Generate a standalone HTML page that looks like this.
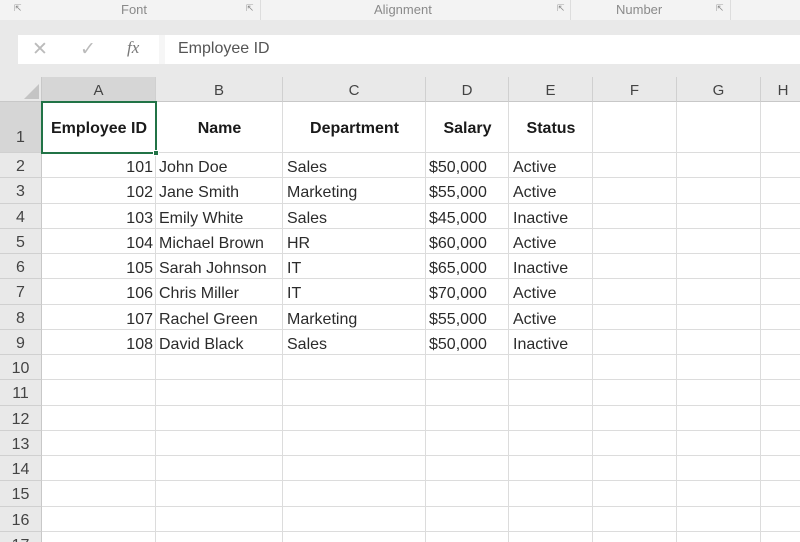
<!DOCTYPE html>
<html style="overflow:hidden;width:800px;height:542px"><head><meta charset="utf-8"><style>
*{margin:0;padding:0;box-sizing:border-box}
body{width:800px;height:542px;overflow:hidden;background:#e9e9e9;font-family:"Liberation Sans",sans-serif;position:relative}
.a{position:absolute}
.rib{left:0;top:0;width:800px;height:20px;background:#f3f3f3;color:#8a8a8a;font-size:13px}
.fb{left:18px;top:35px;width:782px;height:29px;background:#f6f6f6}
.grid{left:0;top:77px;width:800px;height:465px;background:#fff}
.ch{top:77px;height:25px;background:#e9e9e9;border-right:1px solid #d0d0d0;border-bottom:1px solid #c8c8c8;text-align:center;color:#444;font-size:15px;line-height:27px}
.rh{left:0;width:42px;background:#e9e9e9;border-bottom:1px solid #d0d0d0;border-right:1px solid #c8c8c8;text-align:center;color:#444;font-size:16px}
.vl{top:102px;width:1px;height:440px;background:#dcdcdc}
.hl{left:42px;width:758px;height:1px;background:#dcdcdc}
.c{font-size:16px;color:#2b2b2b;white-space:nowrap;line-height:25px;height:25px}
.b{font-weight:bold;font-size:16px;color:#1a1a1a}
</style></head><body>
<div class="a rib">
 <span class="a" style="left:14px;top:3px;font-size:9px">&#8689;</span>
 <span class="a" style="left:121px;top:2px">Font</span>
 <span class="a" style="left:246px;top:3px;font-size:9px">&#8689;</span>
 <div class="a" style="left:260px;top:0;width:1px;height:20px;background:#ddd"></div>
 <span class="a" style="left:374px;top:2px">Alignment</span>
 <span class="a" style="left:557px;top:3px;font-size:9px">&#8689;</span>
 <div class="a" style="left:570px;top:0;width:1px;height:20px;background:#ddd"></div>
 <span class="a" style="left:616px;top:2px">Number</span>
 <span class="a" style="left:716px;top:3px;font-size:9px">&#8689;</span>
 <div class="a" style="left:730px;top:0;width:1px;height:20px;background:#ddd"></div>
</div>
<div class="a fb"></div>
<div class="a" style="left:18px;top:35px;width:141px;height:29px;background:#fff"></div>
<span class="a" style="left:32px;top:38px;color:#bbb;font-size:19px">&#10005;</span>
<span class="a" style="left:80px;top:38px;color:#bbb;font-size:19px">&#10003;</span>
<span class="a" style="left:127px;top:38px;color:#777;font-size:17px;font-family:'Liberation Serif',serif;font-style:italic">fx</span>
<div class="a" style="left:165px;top:35px;width:635px;height:29px;background:#fff"></div>
<span class="a" style="left:178px;top:40px;color:#555;font-size:16px">Employee ID</span>

<div class="a grid"></div>
<div class="a" style="left:0;top:77px;width:42px;height:25px;background:#e9e9e9;border-right:1px solid #c8c8c8;border-bottom:1px solid #c8c8c8"></div>
<div class="a" style="left:24px;top:84px;width:0;height:0;border-left:15px solid transparent;border-bottom:15px solid #c4c4c4"></div>
<div class="a ch" style="left:42px;width:114px;background:#d6d6d6">A</div>
<div class="a ch" style="left:156px;width:127px">B</div>
<div class="a ch" style="left:283px;width:143px">C</div>
<div class="a ch" style="left:426px;width:83px">D</div>
<div class="a ch" style="left:509px;width:84px">E</div>
<div class="a ch" style="left:593px;width:84px">F</div>
<div class="a ch" style="left:677px;width:84px">G</div>
<div class="a ch" style="left:761px;width:45px">H</div>

<div class="a vl" style="left:155px"></div>
<div class="a vl" style="left:282px"></div>
<div class="a vl" style="left:425px"></div>
<div class="a vl" style="left:508px"></div>
<div class="a vl" style="left:592px"></div>
<div class="a vl" style="left:676px"></div>
<div class="a vl" style="left:760px"></div>

<div class="a rh" style="top:102px;height:51px;background:#d6d6d6;line-height:72px">1</div>
<div class="a rh" style="top:153px;height:25px;line-height:27px">2</div>
<div class="a rh" style="top:178px;height:26px;line-height:27px">3</div>
<div class="a rh" style="top:204px;height:25px;line-height:27px">4</div>
<div class="a rh" style="top:229px;height:25px;line-height:27px">5</div>
<div class="a rh" style="top:254px;height:25px;line-height:27px">6</div>
<div class="a rh" style="top:279px;height:26px;line-height:27px">7</div>
<div class="a rh" style="top:305px;height:25px;line-height:27px">8</div>
<div class="a rh" style="top:330px;height:25px;line-height:27px">9</div>
<div class="a rh" style="top:355px;height:25px;line-height:27px">10</div>
<div class="a rh" style="top:380px;height:26px;line-height:27px">11</div>
<div class="a rh" style="top:406px;height:25px;line-height:27px">12</div>
<div class="a rh" style="top:431px;height:25px;line-height:27px">13</div>
<div class="a rh" style="top:456px;height:25px;line-height:27px">14</div>
<div class="a rh" style="top:481px;height:26px;line-height:27px">15</div>
<div class="a rh" style="top:507px;height:25px;line-height:27px">16</div>
<div class="a rh" style="top:532px;height:10px;line-height:27px;overflow:hidden;border-bottom:none">17</div>

<div class="a hl" style="top:152px"></div>
<div class="a hl" style="top:177px"></div>
<div class="a hl" style="top:203px"></div>
<div class="a hl" style="top:228px"></div>
<div class="a hl" style="top:253px"></div>
<div class="a hl" style="top:278px"></div>
<div class="a hl" style="top:304px"></div>
<div class="a hl" style="top:329px"></div>
<div class="a hl" style="top:354px"></div>
<div class="a hl" style="top:379px"></div>
<div class="a hl" style="top:405px"></div>
<div class="a hl" style="top:430px"></div>
<div class="a hl" style="top:455px"></div>
<div class="a hl" style="top:480px"></div>
<div class="a hl" style="top:506px"></div>
<div class="a hl" style="top:531px"></div>

<div class="a" style="left:41px;top:101px;width:116px;height:53px;border:2px solid #217346"></div>
<div class="a" style="left:153px;top:150px;width:6px;height:6px;background:#217346;border:1px solid #fff"></div>

<div class="a c b" style="left:42px;top:116px;width:114px;text-align:center">Employee ID</div>
<div class="a c b" style="left:156px;top:116px;width:127px;text-align:center">Name</div>
<div class="a c b" style="left:283px;top:116px;width:143px;text-align:center">Department</div>
<div class="a c b" style="left:426px;top:116px;width:83px;text-align:center">Salary</div>
<div class="a c b" style="left:509px;top:116px;width:84px;text-align:center">Status</div>

<div class="a" style="left:0;top:155px;width:800px">
<div class="a c" style="left:42px;top:0;width:111px;text-align:right">101</div><div class="a c" style="left:159px;top:0">John Doe</div><div class="a c" style="left:287px;top:0">Sales</div><div class="a c" style="left:429px;top:0">$50,000</div><div class="a c" style="left:513px;top:0">Active</div>
<div class="a c" style="left:42px;top:25px;width:111px;text-align:right">102</div><div class="a c" style="left:159px;top:25px">Jane Smith</div><div class="a c" style="left:287px;top:25px">Marketing</div><div class="a c" style="left:429px;top:25px">$55,000</div><div class="a c" style="left:513px;top:25px">Active</div>
<div class="a c" style="left:42px;top:51px;width:111px;text-align:right">103</div><div class="a c" style="left:159px;top:51px">Emily White</div><div class="a c" style="left:287px;top:51px">Sales</div><div class="a c" style="left:429px;top:51px">$45,000</div><div class="a c" style="left:513px;top:51px">Inactive</div>
<div class="a c" style="left:42px;top:76px;width:111px;text-align:right">104</div><div class="a c" style="left:159px;top:76px">Michael Brown</div><div class="a c" style="left:287px;top:76px">HR</div><div class="a c" style="left:429px;top:76px">$60,000</div><div class="a c" style="left:513px;top:76px">Active</div>
<div class="a c" style="left:42px;top:101px;width:111px;text-align:right">105</div><div class="a c" style="left:159px;top:101px">Sarah Johnson</div><div class="a c" style="left:287px;top:101px">IT</div><div class="a c" style="left:429px;top:101px">$65,000</div><div class="a c" style="left:513px;top:101px">Inactive</div>
<div class="a c" style="left:42px;top:126px;width:111px;text-align:right">106</div><div class="a c" style="left:159px;top:126px">Chris Miller</div><div class="a c" style="left:287px;top:126px">IT</div><div class="a c" style="left:429px;top:126px">$70,000</div><div class="a c" style="left:513px;top:126px">Active</div>
<div class="a c" style="left:42px;top:152px;width:111px;text-align:right">107</div><div class="a c" style="left:159px;top:152px">Rachel Green</div><div class="a c" style="left:287px;top:152px">Marketing</div><div class="a c" style="left:429px;top:152px">$55,000</div><div class="a c" style="left:513px;top:152px">Active</div>
<div class="a c" style="left:42px;top:177px;width:111px;text-align:right">108</div><div class="a c" style="left:159px;top:177px">David Black</div><div class="a c" style="left:287px;top:177px">Sales</div><div class="a c" style="left:429px;top:177px">$50,000</div><div class="a c" style="left:513px;top:177px">Inactive</div>
</div>
</body></html>
